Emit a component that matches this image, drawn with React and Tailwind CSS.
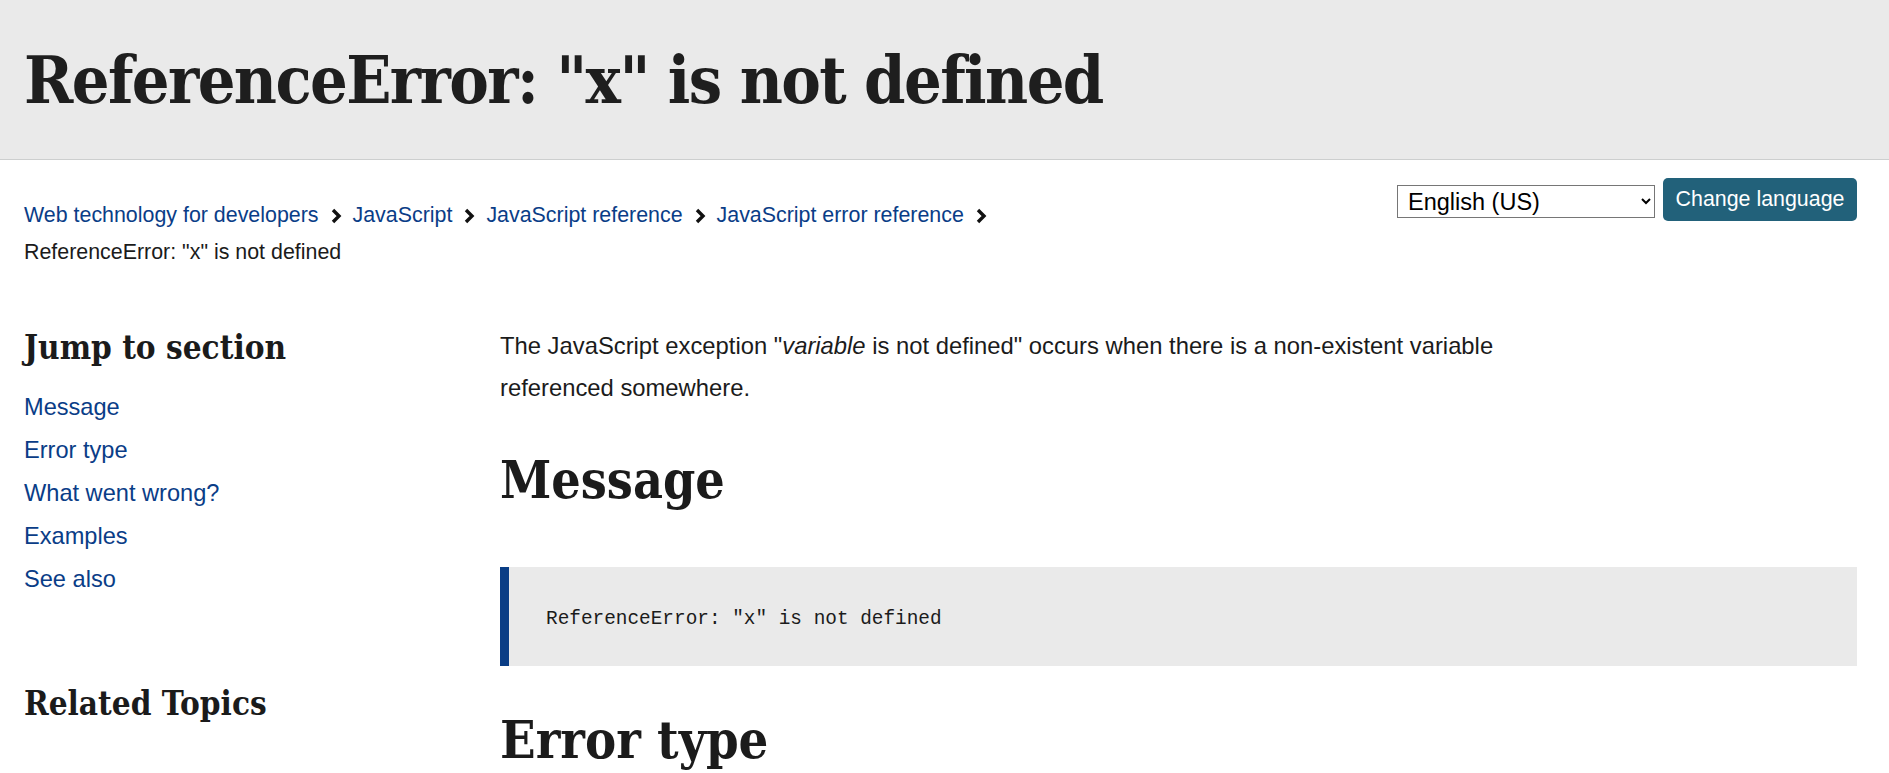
import React from 'react';

const sans = { fontFamily: '"Liberation Sans", Arial, sans-serif' };
const slab = { fontFamily: '"DejaVu Serif Condensed", "DejaVu Serif", serif' };
const mono = { fontFamily: '"Liberation Mono", "Courier New", monospace' };

const crumbs = [
  'Web technology for developers',
  'JavaScript',
  'JavaScript reference',
  'JavaScript error reference',
];

const sections = ['Message', 'Error type', 'What went wrong?', 'Examples', 'See also'];

const Chevron = () => (
  <svg width="12" height="16" viewBox="0 0 12 16" className="mx-[11px] shrink-0">
    <path d="M3 2 L9 8 L3 14" fill="none" stroke="#111" strokeWidth="3.4" strokeLinejoin="miter" />
  </svg>
);

export default function App() {
  return (
    <div className="min-h-screen bg-white text-[#1b1b1b]" style={sans}>
      {/* Title bar */}
      <header className="h-[160px] bg-[#eaeaea] border-b border-[#cdcfcf] flex items-center px-[24px]">
        <h1
          className="text-[66px] leading-none font-bold font-stretch-condensed tracking-[-1.6px] text-[#1e1e1e]"
          style={slab}
        >
          ReferenceError: "x" is not defined
        </h1>
      </header>

      {/* Breadcrumbs + language */}
      <div className="flex justify-between pl-[24px] pr-[32px] pt-[18px]">
        <nav className="mt-[19px] text-[21.4px] leading-[37px]">
          <div className="flex items-center">
            {crumbs.map((c) => (
              <React.Fragment key={c}>
                <a href="#" className="text-[#0a3d87]">{c}</a>
                <Chevron />
              </React.Fragment>
            ))}
          </div>
          <div>ReferenceError: "x" is not defined</div>
        </nav>

        <div className="flex items-start gap-[8px]">
          <select
            className="mt-[7px] h-[33px] w-[258px] border border-[#767676] bg-white text-[23.5px] leading-none px-[6px] text-black"
            defaultValue="en-US"
          >
            <option value="en-US">English (US)</option>
          </select>
          <button className="h-[43px] w-[194px] rounded-[5px] bg-[#22617a] text-white text-[21.4px]">
            Change language
          </button>
        </div>
      </div>

      {/* Body */}
      <div className="flex pl-[24px] pr-[32px] mt-[54px]">
        <aside className="w-[476px] shrink-0">
          <h2 className="mt-[3px] text-[33px] leading-[40px] font-bold font-stretch-condensed" style={slab}>
            Jump to section
          </h2>
          <ul className="mt-[18px] text-[23.6px] leading-[43px]">
            {sections.map((s) => (
              <li key={s}>
                <a href="#" className="text-[#0a3d87]">{s}</a>
              </li>
            ))}
          </ul>
          <h2 className="mt-[83px] text-[33px] leading-[40px] font-bold font-stretch-condensed" style={slab}>
            Related Topics
          </h2>
        </aside>

        <main className="flex-1">
          <p className="text-[23.8px] leading-[42px] max-w-[1010px]">
            The JavaScript exception "<em>variable</em> is not defined" occurs when there is a non-existent variable referenced somewhere.
          </p>

          <h2 className="mt-[41px] text-[51.5px] leading-[61px] font-bold font-stretch-condensed" style={slab}>
            Message
          </h2>

          <div className="mt-[56px] h-[99px] bg-[#eaeaea] border-l-[9px] border-[#0a3d85] flex items-center pl-[37px] pt-[7px]">
            <pre className="text-[19.4px] text-[#1b1b1b]" style={mono}>ReferenceError: "x" is not defined</pre>
          </div>

          <h2 className="mt-[43px] text-[52px] leading-[61px] font-bold font-stretch-condensed" style={slab}>
            Error type
          </h2>
        </main>
      </div>
    </div>
  );
}
